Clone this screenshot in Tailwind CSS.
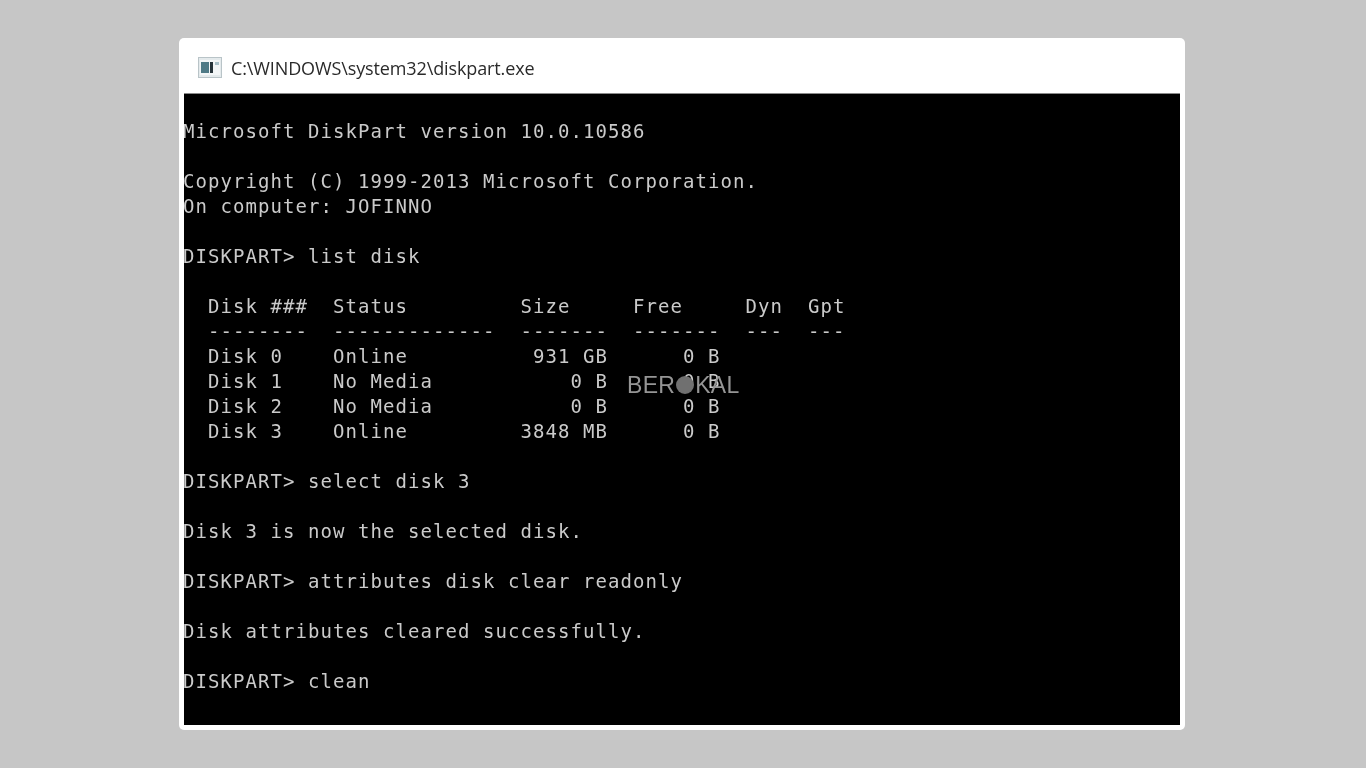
<!DOCTYPE html>
<html lang="en">
    <head>
        <meta charset="UTF-8" />
        <meta name="viewport" content="width=device-width, initial-scale=1.0" />
        <title>diskpart</title>
        <script src="https://cdn.jsdelivr.net/npm/@tailwindcss/browser@4"></script>
    </head>
    <body class="bg-[#c6c6c6] h-screen overflow-hidden">
        <div class="pt-[38px] pr-[2px] flex justify-center">
            <div class="relative w-[1006px] h-[692px] bg-white rounded-[5px] px-[5px] pb-[5px] flex flex-col">
                <!-- title bar -->
                <div class="h-[55px] flex items-center pl-[14px] gap-[9px]">
                    <svg class="mt-[3px] blur-[0.4px]" width="24" height="21" viewBox="0 0 24 21">
                        <rect x="0.5" y="0.5" width="23" height="20" fill="#e4eaec" stroke="#b9c4c8" />
                        <rect x="2" y="3" width="20" height="15" fill="#f3f6f7" />
                        <rect x="3" y="5" width="8" height="11" fill="#4f7a86" />
                        <rect x="12" y="5" width="3" height="11" fill="#27343a" />
                        <rect x="17" y="5" width="4" height="3" fill="#a9c0c8" />
                    </svg>
                    <span class="font-['Open_Sans',sans-serif] text-[18px] tracking-[-0.12px] text-[#2a2a2a] mt-[5px] blur-[0.3px]">C:\WINDOWS\system32\diskpart.exe</span>
                </div>
                <!-- console -->
                <div class="flex-1 bg-black border-t border-[#8a8a8a] overflow-hidden">
                    <pre class="-ml-[1px] mt-[25px] text-[#cacaca] font-['DejaVu_Sans_Mono',monospace] text-[19px] tracking-[1.06px] leading-[25px] blur-[0.4px]">Microsoft DiskPart version 10.0.10586

Copyright (C) 1999-2013 Microsoft Corporation.
On computer: JOFINNO

DISKPART> list disk

  Disk ###  Status         Size     Free     Dyn  Gpt
  --------  -------------  -------  -------  ---  ---
  Disk 0    Online          931 GB      0 B
  Disk 1    No Media           0 B      0 B
  Disk 2    No Media           0 B      0 B
  Disk 3    Online         3848 MB      0 B

DISKPART> select disk 3

Disk 3 is now the selected disk.

DISKPART> attributes disk clear readonly

Disk attributes cleared successfully.

DISKPART> clean</pre>
                </div>
                <!-- watermark -->
                <div class="absolute left-[448px] top-[333px] flex items-center font-['Liberation_Sans',sans-serif] text-[23px] leading-[28px] tracking-[0.3px] text-[#959595] blur-[0.3px]">
                    <span>BER</span>
                    <span class="w-[18px] h-[18px] rounded-full bg-[#707070] mx-[1px]"></span>
                    <span>KAL</span>
                </div>
            </div>
        </div>
    </body>
</html>
